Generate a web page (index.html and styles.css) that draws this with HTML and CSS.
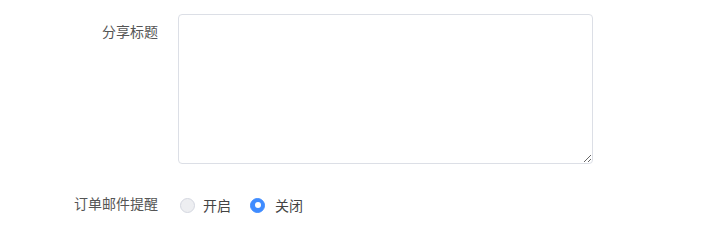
FILE: index.html
```html
<!DOCTYPE html>
<html lang="zh">
<head>
<meta charset="utf-8">
<link rel="stylesheet" href="styles.css">
</head>
<body>
<form class="form">
  <div class="form-item">
    <label class="form-label">分享标题</label>
    <div class="form-content">
      <textarea class="textarea"></textarea>
    </div>
  </div>
  <div class="form-item">
    <label class="form-label">订单邮件提醒</label>
    <div class="form-content radios">
      <label class="radio"><span class="radio-dot"></span><span class="radio-text">开启</span></label>
      <label class="radio checked"><span class="radio-dot"></span><span class="radio-text">关闭</span></label>
    </div>
  </div>
</form>
</body>
</html>
```
FILE: styles.css
```css
html, body {
  margin: 0;
  padding: 0;
  background: #fff;
}
body {
  font-family: "Noto Sans CJK SC", "Noto Sans", sans-serif;
  font-size: 14px;
  color: #606266;
}
.form {
  padding-top: 14px;
}
.form-item {
  display: grid;
  grid-template-columns: 158px 415px;
  column-gap: 20px;
  margin-bottom: 22px;
}
.form-label {
  text-align: right;
  line-height: 34px;
  color: #555;
}
.textarea {
  display: block;
  box-sizing: border-box;
  width: 415px;
  height: 150px;
  margin: 0;
  border: 1px solid #dcdfe6;
  border-radius: 4px;
  padding: 5px 15px;
  font: inherit;
  outline: none;
}
.radios {
  display: flex;
  align-items: center;
  height: 38px;
  padding-left: 2px;
}
.radio {
  display: flex;
  align-items: center;
  margin-right: 19px;
  color: #444;
}
.radio-dot {
  box-sizing: border-box;
  width: 15px;
  height: 15px;
  border-radius: 50%;
  border: 1px solid #d4d7e0;
  background: #edeef1;
  position: relative;
}
.radio.checked .radio-dot {
  border-color: #3f8cff;
  background: #3f8cff;
}
.radio.checked .radio-dot::after {
  content: "";
  position: absolute;
  left: 50%;
  top: 50%;
  width: 6px;
  height: 6px;
  margin: -3px 0 0 -3px;
  border-radius: 50%;
  background: #fff;
}
.radio-text {
  padding-left: 8px;
  line-height: 20px;
}
.radio.checked .radio-text {
  padding-left: 10px;
}
```
